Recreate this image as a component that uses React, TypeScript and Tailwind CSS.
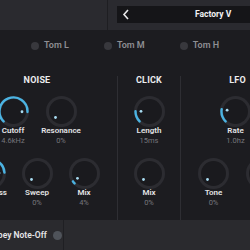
import React from 'react';

const ARC = '#4bb3e2';

function polar(cx: number, cy: number, r: number, deg: number) {
  const a = (deg * Math.PI) / 180;
  return [cx + r * Math.sin(a), cy - r * Math.cos(a)];
}

function Knob({ value }: { value: number }) {
  const c = 15.5;
  const start = -135;
  const end = start + 270 * value;
  const [sx, sy] = polar(c, c, 14, start);
  const [ex, ey] = polar(c, c, 14, end);
  const large = 270 * value > 180 ? 1 : 0;
  const [dx, dy] = polar(c, c, 8.5, end);
  return (
    <svg width="31" height="31" viewBox="0 0 31 31" className="block">
      <circle cx={c} cy={c} r="15.5" fill="#2c2c31" />
      <circle cx={c} cy={c} r="12.5" fill="#1a1a1e" />
      {value > 0.005 && (
        <path d={`M ${sx} ${sy} A 14 14 0 ${large} 1 ${ex} ${ey}`} stroke={ARC} strokeWidth="2.4" fill="none" strokeLinecap="round" />
      )}
      <circle cx={dx} cy={dy} r="1.4" fill="#a9dcf2" />
    </svg>
  );
}

function Cell({ label, val, v, w = 'w-[48px]' }: { label: string; val: string; v: number; w?: string }) {
  return (
    <div className={`${w} flex flex-col items-center shrink-0`}>
      <Knob value={v} />
      <div className="text-[8px] leading-[8px] font-semibold text-[#e4e4e6] whitespace-nowrap">{label}</div>
      <div className="mt-[2px] text-[7.5px] leading-[8px] text-[#76767c] whitespace-nowrap">{val}</div>
    </div>
  );
}

function Section({ title, w, children, border }: { title: string; w: string; children: React.ReactNode; border?: boolean }) {
  return (
    <div className={`${w} shrink-0 flex flex-col items-center ${border ? 'border-l border-[#2e2e33]' : ''}`}>
      <div className="h-[9px] leading-[9px] text-[9px] font-bold text-[#ececee] tracking-[0.2px]">{title}</div>
      {children}
    </div>
  );
}

function Tom({ name }: { name?: string }) {
  return (
    <div className="flex items-center gap-[5px] shrink-0">
      <span className="w-[8px] h-[8px] rounded-full bg-[#38383d]" />
      {name && <span className="text-[9px] font-semibold text-[#8e8e93] whitespace-nowrap">{name}</span>}
    </div>
  );
}

export default function App() {
  return (
    <div className="w-[250px] h-[250px] overflow-hidden bg-[#1c1c20] flex flex-col" style={{ fontFamily: 'Roboto, "Liberation Sans", sans-serif' }}>
      <div className="h-[30px] shrink-0 bg-[#2a2a2f] flex">
        <div className="w-[108px] shrink-0 border-r border-[#1e1e22]" />
        <div className="ml-[9px] mt-[6px] h-[17px] flex-1 bg-[#151518] flex items-center">
          <svg width="8" height="11" viewBox="0 0 8 11" className="ml-[5px]">
            <path d="M6 1 L2 5.5 L6 10" stroke="#e8e8ea" strokeWidth="1.6" fill="none" />
          </svg>
          <span className="ml-[65px] text-[8.5px] font-bold text-[#f2f2f4] whitespace-nowrap">Factory V</span>
        </div>
      </div>

      <div className="h-[30px] shrink-0 flex items-center pl-[31px] gap-[35px] pt-[1px]">
        <Tom name="Tom L" />
        <Tom name="Tom M" />
        <Tom name="Tom H" />
        <Tom />
      </div>

      <div className="h-[160px] shrink-0 pt-[16px] flex ml-[-43px]">
        <Section title="NOISE" w="w-[160px]">
          <div className="mt-[11px] flex justify-center">
            <Cell label="Cutoff" val="4.6kHz" v={0.84} />
            <Cell label="Resonance" val="0%" v={0} />
          </div>
          <div className="mt-[13px] flex justify-center">
            <Cell label="Highpass" val="80%" v={0.82} w="w-[47px]" />
            <Cell label="Sweep" val="0%" v={0} w="w-[47px]" />
            <Cell label="Mix" val="4%" v={0.04} w="w-[47px]" />
          </div>
        </Section>
        <Section title="CLICK" w="w-[63px]" border>
          <div className="mt-[11px] flex justify-center">
            <Cell label="Length" val="15ms" v={0.17} />
          </div>
          <div className="mt-[13px] flex justify-center">
            <Cell label="Mix" val="0%" v={0} />
          </div>
        </Section>
        <Section title="LFO" w="w-[114px]" border>
          <div className="mt-[11px] flex justify-center pr-[4px]">
            <Cell label="Rate" val="1.0hz" v={0.2} />
          </div>
          <div className="mt-[13px] flex justify-center">
            <Cell label="Tone" val="0%" v={0} />
            <Cell label="Depth" val="0%" v={0} />
          </div>
        </Section>
      </div>

      <div className="flex-1 bg-[#2a2a2e] flex">
        <div className="w-[72px] shrink-0 border-r border-[#1f1f23] flex items-center ml-[-8px]">
          <span className="text-[8.5px] font-semibold text-[#e6e6e8] whitespace-nowrap">Obey Note-Off</span>
          <span className="ml-[6px] w-[9px] h-[9px] rounded-full bg-[#4f535a] shrink-0" />
        </div>
      </div>
    </div>
  );
}
